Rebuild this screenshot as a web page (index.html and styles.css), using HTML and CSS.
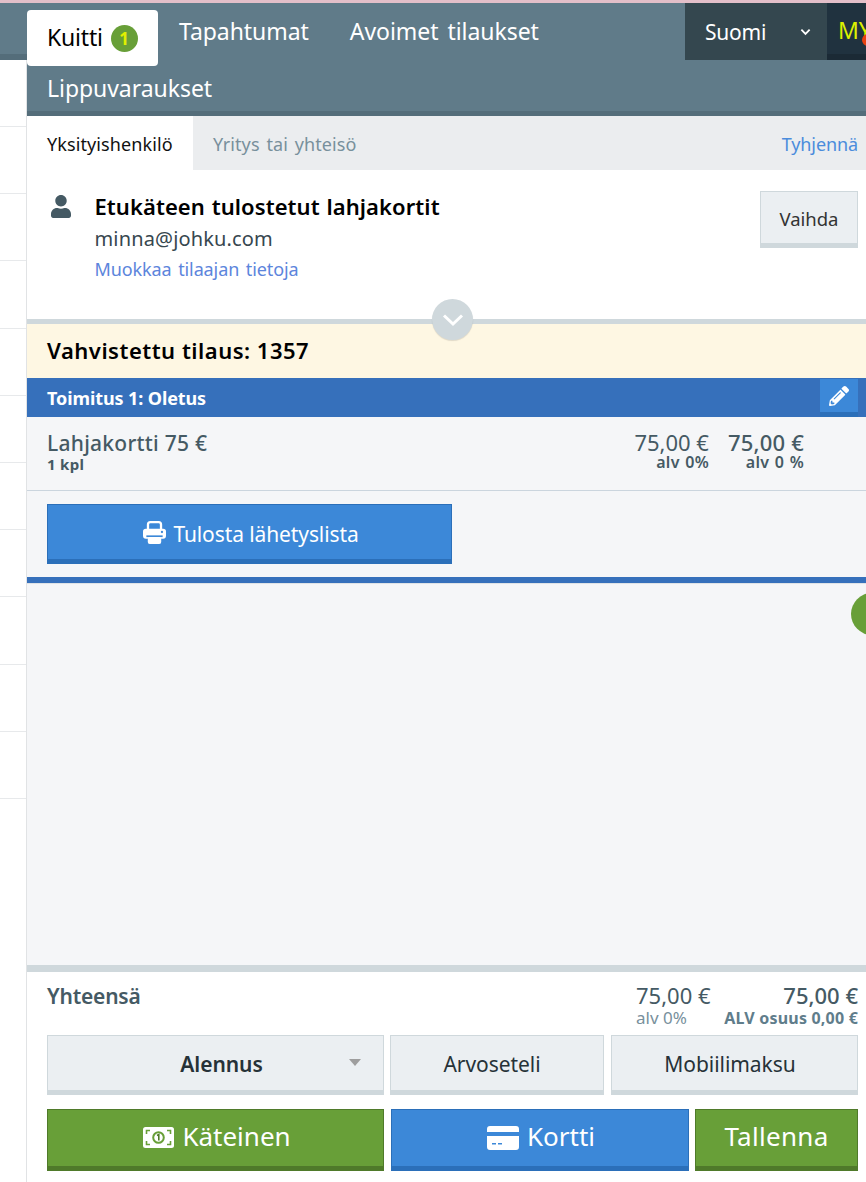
FILE: index.html
```html
<!DOCTYPE html>
<html lang="fi">
<head>
<meta charset="utf-8">
<title>Kuitti</title>
<link rel="stylesheet" href="styles.css">
</head>
<body>
<div class="topline"></div>
<div class="page">
  <aside class="sidelist">
    <div class="side-head"></div>
    <div class="side-row first"></div><div class="side-row"></div><div class="side-row"></div><div class="side-row"></div><div class="side-row"></div><div class="side-row"></div><div class="side-row"></div><div class="side-row"></div><div class="side-row"></div><div class="side-row"></div><div class="side-row"></div>
  </aside>
  <main class="panel">
    <header class="header">
      <nav class="nav">
        <a class="nav-item active">Kuitti <span class="badge">1</span></a>
        <a class="nav-item">Tapahtumat</a>
        <a class="nav-item">Avoimet tilaukset</a>
        <a class="nav-item second">Lippuvaraukset</a>
      </nav>
      <div class="lang">Suomi
        <svg class="lang-chev" viewBox="0 0 12 8"><path d="M1.500 1.500 6 6l4.500-4.500" fill="none" stroke="#fff" stroke-width="2"/></svg>
      </div>
      <div class="user"><span class="user-text">MY</span><span class="user-dot"></span></div>
    </header>
    <div class="tabs">
      <div class="tab active">Yksityishenkilö</div>
      <div class="tab">Yritys tai yhteisö</div>
      <a class="clear">Tyhjennä</a>
    </div>
    <section class="customer">
      <svg class="person" viewBox="0 0 448 512"><path d="M224 256c70.700 0 128-57.300 128-128S294.700 0 224 0 96 57.300 96 128s57.300 128 128 128zm89.600 32h-16.700c-22.200 10.200-46.900 16-72.900 16s-50.600-5.800-72.900-16h-16.700C60.200 288 0 348.200 0 422.400V464c0 26.500 21.500 48 48 48h352c26.500 0 48-21.500 48-48v-41.600c0-74.200-60.200-134.400-134.400-134.400z"/></svg>
      <div class="cust-info">
        <div class="cust-name">Etukäteen tulostetut lahjakortit</div>
        <div class="cust-mail">minna@johku.com</div>
        <a class="cust-link">Muokkaa tilaajan tietoja</a>
      </div>
      <button class="btn btn-light change">Vaihda</button>
      <div class="collapse"><svg viewBox="0 0 24 14"><path d="M3 2.500 12 11l9-8.500" fill="none" stroke="#fff" stroke-width="3"/></svg></div>
    </section>
    <div class="order">Vahvistettu tilaus: 1357</div>
    <div class="delivery">
      <span>Toimitus 1: Oletus</span>
      <button class="edit"><svg viewBox="0 0 512 512"><path d="M497.900 142.100l-46.100 46.100c-4.700 4.700-12.300 4.700-17 0l-111-111c-4.700-4.700-4.700-12.300 0-17l46.100-46.100c18.700-18.700 49.100-18.700 67.900 0l60.100 60.100c18.800 18.700 18.800 49.100 0 67.900zM284.200 99.800L21.600 362.400.4 483.900c-2.900 16.400 11.400 30.600 27.800 27.800l121.500-21.300 262.600-262.600c4.700-4.700 4.700-12.300 0-17l-111-111c-4.800-4.700-12.400-4.700-17.100 0zM124.100 339.900c-5.500-5.500-5.500-14.300 0-19.800l154-154c5.500-5.500 14.300-5.500 19.800 0s5.500 14.300 0 19.800l-154 154c-5.500 5.500-14.300 5.500-19.800 0zM88 424h48v36.300l-64.500 11.300-31.100-31.100L51.700 376H88v48z"/></svg></button>
    </div>
    <section class="content">
      <div class="line">
        <div class="line-main">
          <div class="line-name">Lahjakortti 75 €</div>
          <div class="line-qty">1 kpl</div>
        </div>
        <div class="line-price net">
          <div class="price">75,00 €</div>
          <div class="vat">alv 0%</div>
        </div>
        <div class="line-price gross">
          <div class="price">75,00 €</div>
          <div class="vat">alv 0 %</div>
        </div>
      </div>
      <div class="print-row">
        <button class="btn btn-blue print"><svg class="ico-print" viewBox="0 0 24 24"><rect x="5.200" y="1.200" width="13.600" height="10" rx="2.500" fill="none" stroke="#fff" stroke-width="2.400"/><rect y="8" width="24" height="10.500" rx="3" fill="#fff"/><rect x="3.500" y="15" width="17" height="1.800" fill="#3c88d8"/><rect x="5" y="16.800" width="14" height="7.200" rx="2" fill="#fff"/><circle cx="19.800" cy="11.500" r="1.200" fill="#3c88d8"/></svg>Tulosta lähetyslista</button>
      </div>
      <div class="delivery-end"></div>
      <div class="fab"></div>
    </section>
    <footer class="footer">
      <div class="totals">
        <div class="total-label">Yhteensä</div>
        <div class="total-net">
          <div class="price">75,00 €</div>
          <div class="total-vat">alv 0%</div>
        </div>
        <div class="total-gross">
          <div class="price">75,00 €</div>
          <div class="total-share">ALV osuus 0,00 €</div>
        </div>
      </div>
      <div class="row-light">
        <button class="btn btn-light discount">Alennus<span class="caret"></span></button>
        <button class="btn btn-light voucher">Arvoseteli</button>
        <button class="btn btn-light mobile">Mobiilimaksu</button>
      </div>
      <div class="row-pay">
        <button class="btn btn-green cash"><svg class="ico-cash" viewBox="0 0 31 21"><rect width="31" height="21" rx="2.500" fill="#fff"/><path d="M3.500 7V3.500H7M24 3.500h3.500V7M3.500 14v3.500H7M24 17.500h3.500V14" fill="none" stroke="#689f38" stroke-width="1.600"/><circle cx="15.500" cy="10.500" r="5.300" fill="#fff" stroke="#689f38" stroke-width="2"/><path d="M14 8.500l1.800-1v6" fill="none" stroke="#4f7a2a" stroke-width="1.600"/></svg>Käteinen</button>
        <button class="btn btn-blue card"><svg class="ico-card" viewBox="0 0 32 24"><path fill-rule="evenodd" d="M3 0h26a3 3 0 0 1 3 3v3H0V3a3 3 0 0 1 3-3zM0 10h32v11a3 3 0 0 1-3 3H3a3 3 0 0 1-3-3zm5 7v1.500h4V17zm6 0v1.500h4V17z"/></svg>Kortti</button>
        <button class="btn btn-green save">Tallenna</button>
      </div>
    </footer>
  </main>
</div>
</body>
</html>
```

FILE: styles.css
```css
* { box-sizing: border-box; }
html, body { margin: 0; padding: 0; height: 100%; overflow: hidden; }
body { font-family: "Noto Sans", "Open Sans", sans-serif; background: #fff; color: #37474f; display: flex; flex-direction: column; }
a { text-decoration: none; }
button { font-family: inherit; cursor: pointer; }

.topline { height: 3px; background: #e3bfc9; flex: none; }
.page { flex: 1; display: flex; min-height: 0; }

.sidelist { width: 27px; flex: none; border-right: 1px solid #e1e3e5; }
.side-head { height: 57px; background: #607b89; border-bottom: 6px solid #546d7a; margin-right: -1px; }
.side-row { height: 67.200px; border-bottom: 1px solid #e7e9eb; }
.side-row.first { height: 67px; }

.panel { flex: 1; min-width: 0; display: flex; flex-direction: column; }

.header { height: 113px; flex: none; display: flex; background: #607b89; border-bottom: 5px solid #546d7a; align-items: flex-start; }
.nav { flex: 1; min-width: 0; display: flex; flex-wrap: wrap; align-items: flex-start; }
.nav-item { height: 56px; padding: 0 20px 0 21px; display: flex; align-items: center; color: #fff; font-size: 23px; word-spacing: 3px; letter-spacing: -0.05px; }
.nav-item.active { margin-top: 7px; height: 56px; width: 131px; padding: 0 0 3px 20px; background: #fff; color: #000; border-radius: 4px; gap: 8px; letter-spacing: -0.2px; }
.nav-item.second { height: 45px; padding: 0 20px 1px; }
.badge { width: 27px; height: 27px; margin-top: 3px; border-radius: 50%; background: #689f38; color: #e0f000; font-size: 17px; font-weight: 700; display: flex; align-items: center; justify-content: center; letter-spacing: 0; }

.lang { width: 142px; height: 57px; flex: none; background: #34474f; color: #fff; font-size: 21px; letter-spacing: -0.2px; display: flex; align-items: center; justify-content: space-between; padding: 0 16px 0 20px; }
.lang-chev { width: 11px; height: 8px; }
.user { width: 39px; height: 57px; flex: none; position: relative; overflow: hidden; background: #20323f; border-bottom: 6px solid #1b2a35; padding: 13px 0 0 11px; color: #dcf000; font-size: 23px; line-height: 28px; white-space: nowrap; }
.user-dot { position: absolute; right: -8px; top: 31px; width: 12px; height: 12px; background: #e8400f; border-radius: 50%; }

.tabs { height: 54px; flex: none; background: #ebedef; display: flex; align-items: center; font-size: 18px; color: #78909c; }
.tab { height: 100%; display: flex; align-items: center; padding: 2px 20px 0; letter-spacing: 0.1px; word-spacing: 2px; }
.tab.active { background: #fff; color: #111; width: 166px; }
.clear { margin-left: auto; padding: 2px 8px 0 0; color: #4a8cdc; letter-spacing: -0.1px; }

.customer { position: relative; height: 154px; flex: none; background: #fff; border-bottom: 5px solid #cfd8dc; display: flex; align-items: flex-start; padding: 25px 8px 0 24px; }
.person { width: 20px; height: 23px; fill: #455a64; flex: none; margin-right: 23.500px; }
.cust-info { flex: 1; min-width: 0; margin-top: -2px; }
.cust-name { font-size: 22px; font-weight: 600; color: #000; line-height: 26px; letter-spacing: 0.07px; word-spacing: 1px; }
.cust-mail { font-size: 20px; line-height: 28px; margin-top: 6px; color: #37474f; letter-spacing: 0.15px; }
.cust-link { display: block; font-size: 18px; line-height: 26px; margin-top: 3px; color: #5c85dc; letter-spacing: -0.1px; word-spacing: 2px; }
.collapse { position: absolute; left: 405px; bottom: -21px; width: 41px; height: 41px; border-radius: 50%; background: #cfd8dc; box-shadow: 0 1px 1px rgba(0,0,0,.12); display: flex; align-items: center; justify-content: center; z-index: 2; }
.collapse svg { width: 24px; height: 14px; }

.btn { border-radius: 0; display: flex; align-items: center; justify-content: center; margin: 0; padding: 0; }
.btn-light { background: #ebeff2; border: 1px solid #cfd8dc; border-bottom-width: 5px; color: #263238; font-size: 21px; letter-spacing: -0.05px; }
.btn-blue { background: #3c88d8; border: 1px solid #2b6fb9; border-bottom-width: 5px; color: #fff; }
.btn-green { background: #689f38; border: 1px solid #4f7a2a; border-bottom-width: 5px; color: #fff; }
.change { width: 98px; height: 57px; margin-top: -4px; flex: none; font-size: 18.500px; color: #333; padding-top: 2px; }

.order { height: 54px; flex: none; background: #fef7e3; color: #000; font-size: 22px; font-weight: 600; display: flex; align-items: center; padding: 0 0 2px 20px; letter-spacing: 0.5px; }
.delivery { height: 39px; flex: none; background: #3670bb; color: #fff; font-size: 18px; font-weight: 700; display: flex; align-items: center; justify-content: space-between; padding: 0 8px 0 20px; letter-spacing: -0.1px; }
.edit { width: 38px; height: 38px; margin-top: 1px; background: #3c88d8; border: 0; border-bottom: 5px solid #2b6fb9; padding: 0; display: flex; align-items: center; justify-content: center; }
.edit svg { width: 20px; height: 20px; fill: #fff; }

.content { flex: 1; min-height: 0; position: relative; background: #f5f6f8; overflow: hidden; }
.line { height: 74px; display: flex; padding: 13px 62px 0 20px; border-bottom: 1px solid #cbd5de; }
.line-main { flex: 1; min-width: 0; padding-top: 1px; }
.line-name { font-size: 21px; line-height: 24px; font-weight: 500; color: #455a64; letter-spacing: 0.25px; }
.line-qty { font-size: 15px; line-height: 16px; margin-top: 1px; font-weight: 700; color: #455a64; letter-spacing: 0.3px; }
.line-price { text-align: right; }
.line-price.gross { margin-left: 19px; }
.price { font-size: 22px; line-height: 24px; color: #455a64; }
.gross .price { font-weight: 500; letter-spacing: 0.2px; }
.vat { font-size: 16px; line-height: 15px; margin-top: 1px; font-weight: 600; color: #455a64; word-spacing: 1px; letter-spacing: 0.3px; }

.print-row { padding: 13px 20px; }
.print { width: 405px; height: 60px; font-size: 21px; letter-spacing: -0.1px; gap: 7px; padding: 4px 0 0 3px; }
.ico-print { width: 23px; height: 23px; margin-top: -3px; }
.delivery-end { height: 7px; background: #3670bb; border-bottom: 1px solid #dfe3e6; }
.fab { position: absolute; right: -27px; top: 176px; width: 42px; height: 42px; border-radius: 50%; background: #689f38; }

.footer { flex: none; height: 217px; background: #fff; border-top: 7px solid #cfd8dc; padding: 0 8px 11px 20px; display: flex; flex-direction: column; }
.totals { height: 63px; display: flex; }
.total-label { flex: 1; font-size: 21px; font-weight: 600; line-height: 24px; color: #455a64; padding-top: 12px; letter-spacing: -0.2px; }
.total-net { width: 75px; padding-top: 11px; flex: none; }
.total-gross { text-align: right; width: 147px; padding-top: 11px; flex: none; }
.total-gross .price { font-weight: 500; }
.total-vat { font-size: 17px; line-height: 20px; margin-top: 1px; color: #78909c; white-space: nowrap; }
.total-share { font-size: 16px; line-height: 20px; margin-top: 1px; font-weight: 700; color: #607d8b; letter-spacing: 0.2px; white-space: nowrap; }

.row-light { display: flex; gap: 6px; height: 60px; }
.discount { width: 337px; font-weight: 600; position: relative; padding-left: 12px; padding-top: 2px; }
.caret { position: absolute; right: 22px; top: 23px; border: 6px solid transparent; border-top: 7px solid #9e9e9e; border-bottom: 0; }
.voucher { width: 214px; padding-right: 10px; padding-top: 2px; }
.mobile { flex: 1; margin-left: 1px; padding-right: 9px; padding-top: 2px; }

.row-pay { display: flex; gap: 7px; height: 62px; margin-top: 14px; }
.row-pay .btn { font-size: 26px; gap: 8px; padding-bottom: 4px; }
.row-pay .cash { width: 337px; padding-left: 3px; }
.row-pay .card { width: 298px; padding-left: 2px; }
.row-pay .save { flex: 1; margin-left: -1px; letter-spacing: 0.3px; }
.ico-cash { width: 31px; height: 21px; margin-top: 3px; }
.ico-card { width: 32px; height: 24px; fill: #fff; margin-top: 3px; }
```
